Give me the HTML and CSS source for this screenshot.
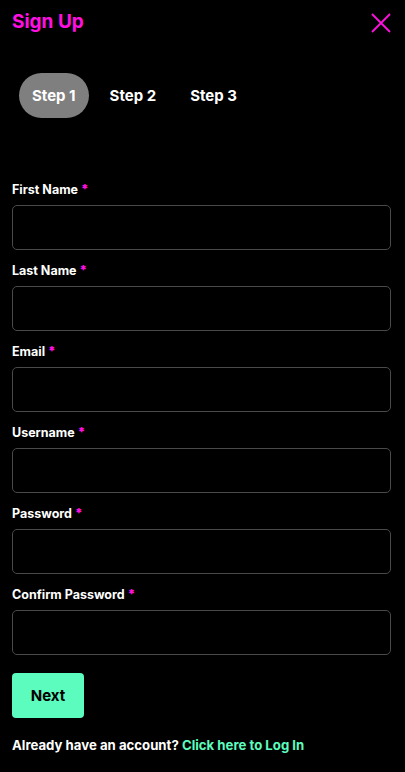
FILE: index.html
```html
<!DOCTYPE html>
<html>
	<head>
		<meta charset="utf-8">
		<title>Sign Up</title>
		<meta name="viewport" content="width=device-width, initial-scale=1">
		<link rel="stylesheet" href="styles.css">
	</head>
	<body>
		<div class="header">
			<h1 class="title">Sign Up</h1>
			<button class="closeBtn" type="button" aria-label="close">
				<svg width="20" height="20" viewBox="0 0 20 20">
					<path d="M1 1 L19 19 M19 1 L1 19" stroke="#ff10e0" stroke-width="1.8" fill="none"/>
				</svg>
			</button>
		</div>

		<div class="steps">
			<span class="step active">Step 1</span>
			<span class="step">Step 2</span>
			<span class="step">Step 3</span>
		</div>

		<form class="form">
			<label class="field">
				<span class="label">First Name <b class="req">*</b></span>
				<input type="text">
			</label>
			<label class="field">
				<span class="label">Last Name <b class="req">*</b></span>
				<input type="text">
			</label>
			<label class="field">
				<span class="label">Email <b class="req">*</b></span>
				<input type="text">
			</label>
			<label class="field">
				<span class="label">Username <b class="req">*</b></span>
				<input type="text">
			</label>
			<label class="field">
				<span class="label">Password <b class="req">*</b></span>
				<input type="password">
			</label>
			<label class="field">
				<span class="label">Confirm Password <b class="req">*</b></span>
				<input type="password">
			</label>
			<button class="nextBtn" type="button">Next</button>
			<p class="footer">Already have an account? <a href="#">Click here to Log In</a></p>
		</form>
	</body>
</html>
```

FILE: styles.css
```css
body{
	margin: 0;
	background: #000;
	color: #fff;
	font-family: Inter, "Noto Sans", sans-serif;
}
.header{
	display: flex;
	justify-content: space-between;
	align-items: center;
	padding: 11px 14px 0 12px;
}
.title{
	margin: 0;
	font-size: 19px;
	font-weight: 700;
	color: #ff10e0;
	line-height: 22px;
}
.closeBtn{
	background: none;
	border: none;
	padding: 0;
	width: 20px;
	height: 20px;
	margin-top: 1px;
}
.steps{
	display: flex;
	gap: 8px;
	padding: 40px 0 0 19px;
}
.step{
	padding: 0 13px;
	height: 45px;
	line-height: 45px;
	border-radius: 23px;
	font-size: 15px;
	font-weight: 700;
}
.step.active{
	background: #7f7f7f;
}
.form{
	padding: 64px 14px 0 12px;
}
.field{
	display: block;
	margin-bottom: 13px;
}
.label{
	display: block;
	font-size: 12.5px;
	font-weight: 700;
	line-height: 16px;
	margin-bottom: 7px;
}
.req{
	color: #ff10e0;
}
input[type = text], input[type = password]{
	display: block;
	box-sizing: border-box;
	width: 100%;
	height: 45px;
	background: #000;
	border: 1px solid #4a4a4a;
	border-radius: 5px;
	color: #fff;
	font-size: 14px;
	padding: 0 10px;
	outline: none;
}
.nextBtn{
	margin-top: 5px;
	width: 72px;
	height: 45px;
	background: #5cfcbe;
	border: none;
	border-radius: 4px;
	font-family: inherit;
	font-size: 15px;
	font-weight: 700;
	color: #000;
}
.footer{
	margin: 19px 0 0;
	font-size: 13.2px;
	font-weight: 700;
	line-height: 16px;
}
.footer a{
	color: #5cfcbe;
	text-decoration: none;
}
```
